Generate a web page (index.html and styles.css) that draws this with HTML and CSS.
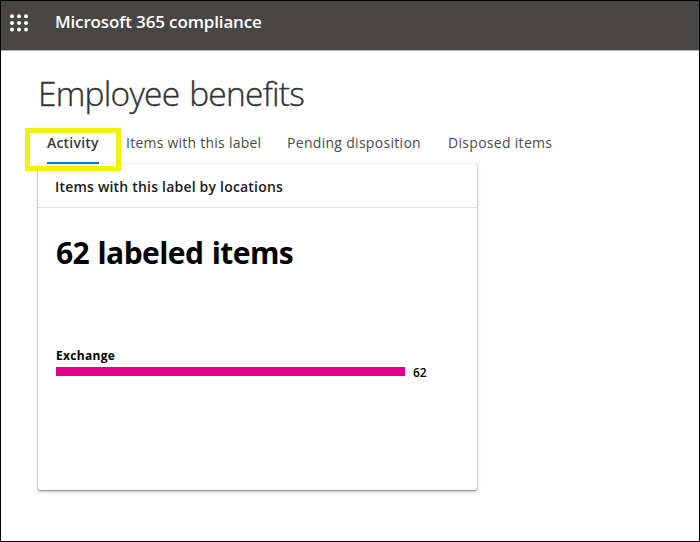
FILE: index.html
```html
<!DOCTYPE html>
<html lang="en">
<head>
<meta charset="utf-8">
<title>Microsoft 365 compliance</title>
<link rel="stylesheet" href="styles.css">
</head>
<body>
<div class="app">
  <header class="topbar">
    <svg class="waffle" width="20" height="20" viewBox="0 0 20 20" fill="#fff" aria-hidden="true">
      <circle cx="3" cy="3.2" r="2"/><circle cx="10" cy="3.2" r="2"/><circle cx="17" cy="3.2" r="2"/>
      <circle cx="3" cy="9.9" r="2"/><circle cx="10" cy="9.9" r="2"/><circle cx="17" cy="9.9" r="2"/>
      <circle cx="3" cy="16.6" r="2"/><circle cx="10" cy="16.6" r="2"/><circle cx="17" cy="16.6" r="2"/>
    </svg>
    <span class="brand">Microsoft 365 compliance</span>
  </header>
  <main class="page">
    <h1 class="title"><span>Employee benefits</span></h1>
    <nav class="tabs">
      <a class="tab active"><span>Activity</span></a>
      <a class="tab items"><span>Items with this label</span></a>
      <a class="tab pending"><span>Pending disposition</span></a>
      <a class="tab"><span>Disposed items</span></a>
    </nav>
    <section class="card">
      <h2 class="card-head"><span>Items with this label by locations</span></h2>
      <div class="card-body">
        <div class="total"><span>62 labeled items</span></div>
        <div class="label"><span>Exchange</span></div>
        <div class="row"><div class="bar"></div><span class="value">62</span></div>
      </div>
    </section>
  </main>
</div>
</body>
</html>
```
FILE: styles.css
```css
*, *::after { box-sizing: border-box; }
body { margin: 0; font-family: "Open Sans", "Noto Sans", sans-serif; color: #000; }
.app { width: 700px; height: 542px; border: 1px solid #000; background: #fff; overflow: hidden; }
.topbar { height: 50px; background: #484644; border-bottom: 1px solid #b5b4b3; display: flex; align-items: flex-start; padding: 11px 0 0 8px; }
.waffle { margin-top: 1px; }
.brand { margin-left: 26px; color: #fff; font-size: 17px; line-height: 20px; font-weight: 600; letter-spacing: -0.14px; white-space: nowrap; }
.page { padding: 19px 0 0 37px; }
.title { margin: 0; height: 46px; font-size: 33.5px; line-height: 46px; font-weight: 300; color: #333; -webkit-text-stroke: 0.35px #333; letter-spacing: -0.77px; word-spacing: 2px; white-space: nowrap; }
.tabs { position: relative; z-index: 1; display: flex; width: 600px; height: 47px; padding: 15px 0 0 9px; font-size: 14px; line-height: 24px; color: #4d4b49; letter-spacing: 0.3px; white-space: nowrap; }
.tab { height: 34px; margin-right: 26px; }
.active { width: 52px; height: 33px; border-bottom: 2px solid #0078d4; font-weight: 600; color: #3b3a39; letter-spacing: 0.2px; }
.active::after { content: ""; position: absolute; left: -13px; top: 12px; width: 96px; height: 43px; border: 5px solid #f2f20d; }
.items { width: 136px; margin-left: 1px; margin-right: 25px; letter-spacing: 0.24px; }
.pending { width: 134px; margin-right: 27px; }
.card { width: 439px; height: 326px; margin-top: 1px; border-radius: 2px; background: #fff; box-shadow: 0 0 1px rgba(0,0,0,.3), 0 1px 2px rgba(0,0,0,.4), 0 2px 5px rgba(0,0,0,.12); }
.card-head { margin: 0; height: 44px; padding: 11px 0 0 17px; border-bottom: 1px solid #e1dfdd; font-size: 14px; line-height: 24px; font-weight: 600; color: #1b1a19; letter-spacing: 0.2px; white-space: nowrap; }
.card-body { padding: 25px 18px; }
.total { height: 40px; font-size: 30px; line-height: 40px; font-weight: 700; letter-spacing: -0.55px; word-spacing: 1px; white-space: nowrap; }
.label { margin-top: 75px; height: 16px; font-size: 12px; line-height: 16px; font-weight: 700; letter-spacing: 0.3px; }
.row { display: flex; align-items: flex-start; height: 17px; }
.bar { width: 349px; height: 9px; margin-top: 3px; background: #e3008c; }
.value { margin-left: 8px; font-size: 12px; line-height: 17px; font-weight: 600; }
```
